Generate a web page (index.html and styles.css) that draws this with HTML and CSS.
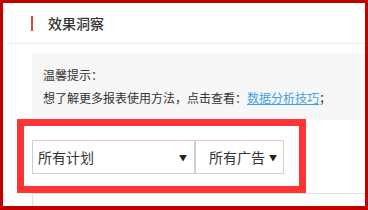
FILE: index.html
```html
<!DOCTYPE html>
<html>
<head>
  <meta charset="utf-8">
  <title>效果洞察</title>
  <link rel="stylesheet" href="styles.css">
</head>
<body>
  <div class="frame">
    <div class="header">
      <span class="bar"></span>
      <span class="title">效果洞察</span>
    </div>
    <div class="content">
      <div class="tip">
        <p>温馨提示：</p>
        <p>想了解更多报表使用方法，点击查看：<a href="#">数据分析技巧</a>；</p>
      </div>
      <div class="filters">
        <div class="select plan"><span>所有计划</span><span class="arrow">▼</span></div>
        <div class="select ad"><span>所有广告</span><span class="arrow">▼</span></div>
      </div>
      <div class="list"></div>
    </div>
    <!-- annotation box -->
    <div class="mark"></div>
  </div>
</body>
</html>
```

FILE: styles.css
```css
body {
  margin: 0;
  font-family: "Noto Sans CJK SC", "Liberation Sans", sans-serif;
  color: #333;
  background: #fff;
}
.frame {
  position: relative;
  width: 368px;
  height: 210px;
  box-sizing: border-box;
  border: 3px solid #c20000;
  border-bottom-width: 4px;
  overflow: hidden;
}
.header {
  display: flex;
  align-items: center;
  height: 40px;
  margin-left: 3px;
  padding-left: 25px;
  border-bottom: 1px solid #ececec;
  box-sizing: content-box;
}
.bar {
  width: 2px;
  height: 15px;
  background: #e4434b;
  margin-right: 15px;
}
.title {
  font-size: 14px;
  font-weight: 500;
  color: #333;
}
.content {
  padding: 9px 0 0 29px;
}
.tip {
  background: #f7f7f7;
  padding: 10px 11px 11px;
  font-size: 12px;
  line-height: 23px;
  color: #333;
}
.tip p { margin: 0; }
.tip a {
  color: #3f9fe8;
  text-decoration: underline;
}
.filters {
  display: flex;
  margin-top: 20px;
}
.select {
  display: flex;
  align-items: center;
  justify-content: space-between;
  height: 34px;
  box-sizing: border-box;
  border: 1px solid #cfcfcf;
  font-size: 14px;
  color: #333;
}
.plan {
  width: 163px;
  padding: 0 7px 0 5px;
}
.ad {
  width: 89px;
  padding: 0 6px 0 13px;
}
.arrow {
  font-size: 8px;
  color: #222;
}
.list {
  margin-top: 19px;
  height: 30px;
  border-top: 1px solid #e2e2e2;
  border-left: 1px solid #e2e2e2;
}
.mark {
  position: absolute;
  left: 14px;
  top: 116px;
  width: 289px;
  height: 74px;
  box-sizing: border-box;
  border: 7px solid #ff3434;
}
```
